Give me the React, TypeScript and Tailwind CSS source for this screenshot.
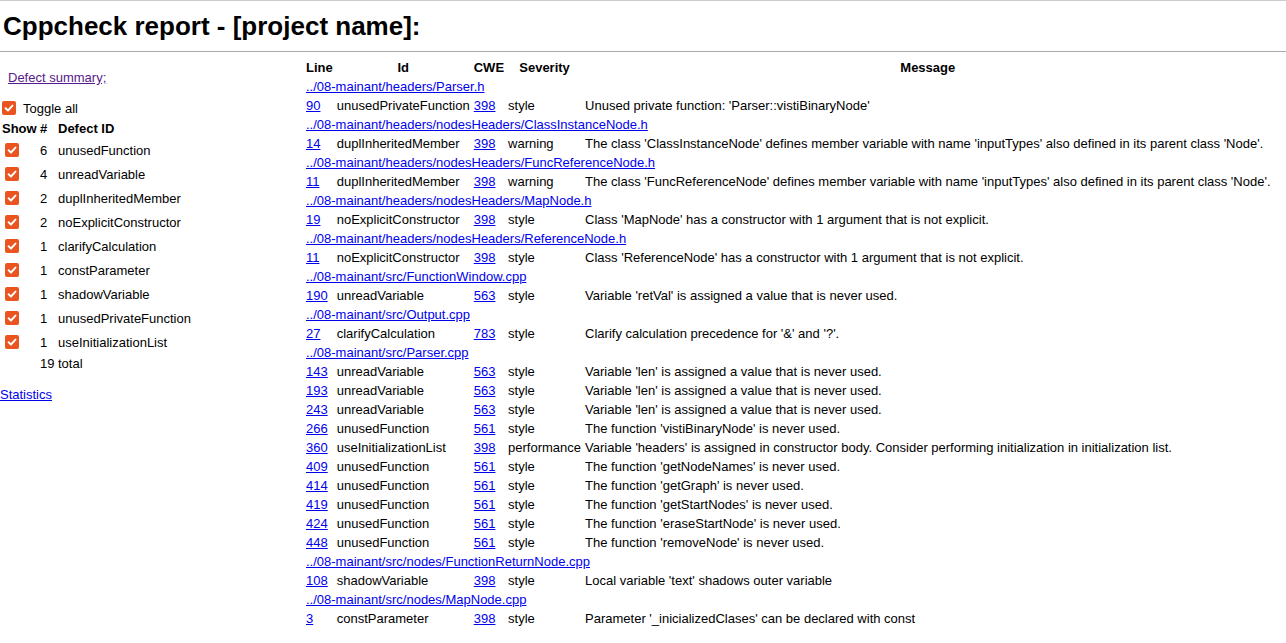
import type { ReactNode } from 'react'

type Issue = { line: string; id: string; cwe: string; severity: string; msg: string }
type FileGroup = { file: string; issues: Issue[] }

const summary: [number, string][] = [
  [6, 'unusedFunction'],
  [4, 'unreadVariable'],
  [2, 'duplInheritedMember'],
  [2, 'noExplicitConstructor'],
  [1, 'clarifyCalculation'],
  [1, 'constParameter'],
  [1, 'shadowVariable'],
  [1, 'unusedPrivateFunction'],
  [1, 'useInitializationList'],
]

const unused = (line: string, fn: string): Issue => ({
  line,
  id: 'unusedFunction',
  cwe: '561',
  severity: 'style',
  msg: `The function '${fn}' is never used.`,
})

const lenUnread = (line: string): Issue => ({
  line,
  id: 'unreadVariable',
  cwe: '563',
  severity: 'style',
  msg: "Variable 'len' is assigned a value that is never used.",
})

const groups: FileGroup[] = [
  {
    file: '../08-mainant/headers/Parser.h',
    issues: [
      { line: '90', id: 'unusedPrivateFunction', cwe: '398', severity: 'style', msg: "Unused private function: 'Parser::vistiBinaryNode'" },
    ],
  },
  {
    file: '../08-mainant/headers/nodesHeaders/ClassInstanceNode.h',
    issues: [
      { line: '14', id: 'duplInheritedMember', cwe: '398', severity: 'warning', msg: "The class 'ClassInstanceNode' defines member variable with name 'inputTypes' also defined in its parent class 'Node'." },
    ],
  },
  {
    file: '../08-mainant/headers/nodesHeaders/FuncReferenceNode.h',
    issues: [
      { line: '11', id: 'duplInheritedMember', cwe: '398', severity: 'warning', msg: "The class 'FuncReferenceNode' defines member variable with name 'inputTypes' also defined in its parent class 'Node'." },
    ],
  },
  {
    file: '../08-mainant/headers/nodesHeaders/MapNode.h',
    issues: [
      { line: '19', id: 'noExplicitConstructor', cwe: '398', severity: 'style', msg: "Class 'MapNode' has a constructor with 1 argument that is not explicit." },
    ],
  },
  {
    file: '../08-mainant/headers/nodesHeaders/ReferenceNode.h',
    issues: [
      { line: '11', id: 'noExplicitConstructor', cwe: '398', severity: 'style', msg: "Class 'ReferenceNode' has a constructor with 1 argument that is not explicit." },
    ],
  },
  {
    file: '../08-mainant/src/FunctionWindow.cpp',
    issues: [
      { line: '190', id: 'unreadVariable', cwe: '563', severity: 'style', msg: "Variable 'retVal' is assigned a value that is never used." },
    ],
  },
  {
    file: '../08-mainant/src/Output.cpp',
    issues: [
      { line: '27', id: 'clarifyCalculation', cwe: '783', severity: 'style', msg: "Clarify calculation precedence for '&' and '?'." },
    ],
  },
  {
    file: '../08-mainant/src/Parser.cpp',
    issues: [
      lenUnread('143'),
      lenUnread('193'),
      lenUnread('243'),
      unused('266', 'vistiBinaryNode'),
      { line: '360', id: 'useInitializationList', cwe: '398', severity: 'performance', msg: "Variable 'headers' is assigned in constructor body. Consider performing initialization in initialization list." },
      unused('409', 'getNodeNames'),
      unused('414', 'getGraph'),
      unused('419', 'getStartNodes'),
      unused('424', 'eraseStartNode'),
      unused('448', 'removeNode'),
    ],
  },
  {
    file: '../08-mainant/src/nodes/FunctionReturnNode.cpp',
    issues: [
      { line: '108', id: 'shadowVariable', cwe: '398', severity: 'style', msg: "Local variable 'text' shadows outer variable" },
    ],
  },
  {
    file: '../08-mainant/src/nodes/MapNode.cpp',
    issues: [
      { line: '3', id: 'constParameter', cwe: '398', severity: 'style', msg: "Parameter '_inicializedClases' can be declared with const" },
    ],
  },
]

function Check() {
  return (
    <span className="inline-flex h-[14px] w-[14px] shrink-0 items-center justify-center rounded-[2px] bg-[#e95420]">
      <svg width="10" height="10" viewBox="0 0 10 10" fill="none">
        <path d="M1.6 5.2 L4 7.5 L8.5 2.6" stroke="white" strokeWidth="1.9" strokeLinecap="round" strokeLinejoin="round" />
      </svg>
    </span>
  )
}

function Link({ children }: { children: ReactNode }) {
  return <a href="#" className="text-[#0000ee] underline">{children}</a>
}

export default function App() {
  return (
    <div className="min-h-screen bg-white border-t border-[#cccccc] font-['Liberation_Sans',Arial,sans-serif] text-[13px] leading-[15px] text-black">
      <div className="h-[51px] border-b border-[#aaaaaa] pl-[3px] pt-[10px]">
        <h1 className="text-[26px] font-bold leading-[30px]">Cppcheck report - [project name]:</h1>
      </div>

      <div className="flex items-start">
        <div className="flex w-[303px] shrink-0 flex-col">
          <p className="mt-[18px] pl-[8px]">
            <a href="#" className="text-[#551a8b] underline">Defect summary;</a>
          </p>
          <label className="mt-[16px] flex h-[14px] items-center gap-[7px] pl-[2px]">
            <Check />
            <span>Toggle all</span>
          </label>
          <div className="mt-[6px] flex font-bold">
            <span className="w-[40px] pl-[2px]">Show</span>
            <span className="w-[18px]">#</span>
            <span>Defect ID</span>
          </div>
          <div className="mt-[2px] flex flex-col">
            {summary.map(([n, id]) => (
              <div key={id} className="flex h-[24px] items-center">
                <span className="flex w-[40px] pl-[5px]">
                  <Check />
                </span>
                <span className="w-[18px]">{n}</span>
                <span>{id}</span>
              </div>
            ))}
          </div>
          <div className="mt-[2px] flex">
            <span className="w-[40px]" />
            <span className="w-[18px]">19</span>
            <span>total</span>
          </div>
          <p className="mt-[16px]">
            <Link>Statistics</Link>
          </p>
        </div>

        <table className="mt-[5px] border-separate border-spacing-[2px] whitespace-nowrap">
          <thead>
            <tr>
              {['Line', 'Id', 'CWE', 'Severity', 'Message'].map((h) => (
                <th key={h} className="p-[1px] text-center font-bold">{h}</th>
              ))}
            </tr>
          </thead>
          <tbody>
            {groups.map((g) => (
              <FileRows key={g.file} group={g} />
            ))}
          </tbody>
        </table>
      </div>
    </div>
  )
}

function FileRows({ group }: { group: FileGroup }) {
  return (
    <>
      <tr>
        <td colSpan={5} className="p-[1px]">
          <Link>{group.file}</Link>
        </td>
      </tr>
      {group.issues.map((it, i) => (
        <tr key={i}>
          <td className="p-[1px]"><Link>{it.line}</Link></td>
          <td className="p-[1px]">{it.id}</td>
          <td className="p-[1px]"><Link>{it.cwe}</Link></td>
          <td className="p-[1px]">{it.severity}</td>
          <td className="p-[1px]">{it.msg}</td>
        </tr>
      ))}
    </>
  )
}
